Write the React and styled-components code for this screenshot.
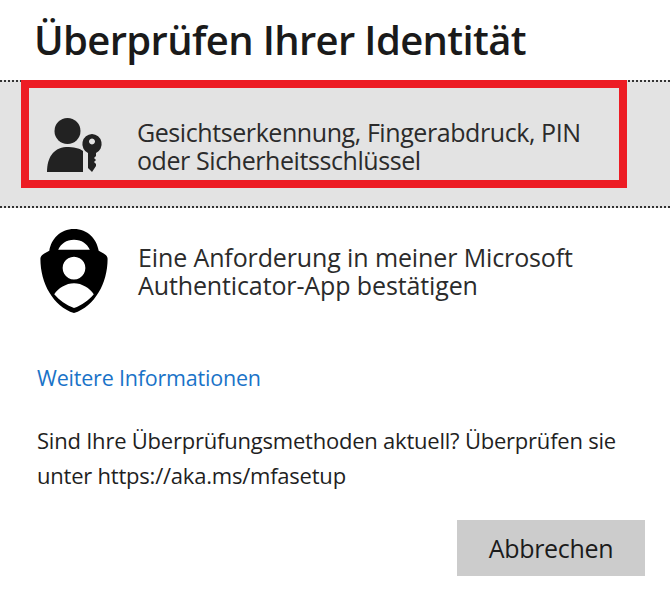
import styled, { createGlobalStyle } from "styled-components";

const GlobalStyle = createGlobalStyle`
  html, body {
    margin: 0;
    padding: 0;
    background: #fff;
  }
`;

const Dialog = styled.div`
  width: 670px;
  height: 600px;
  overflow: hidden;
  display: flex;
  flex-direction: column;
  font-family: "Open Sans", "Noto Sans", sans-serif;
  color: #1b1b1b;
  background: #fff;
`;

const Title = styled.h1`
  margin: 0;
  padding: 15px 0 0 34px;
  height: 80px;
  box-sizing: border-box;
  font-size: 40px;
  line-height: 50px;
  font-weight: 600;
  letter-spacing: -0.65px;
  white-space: nowrap;
  color: #1a1a1a;
`;

const Option = styled.div`
  position: relative;
  display: flex;
  align-items: ${(props) => (props.selected ? "flex-start" : "center")};
  height: ${(props) => (props.selected ? "128px" : "126px")};
  box-sizing: border-box;
  padding-left: ${(props) => (props.selected ? "46px" : "39px")};
  padding-top: ${(props) => (props.selected ? "36px" : "0")};
  background: ${(props) => (props.selected ? "#e3e3e3" : "#fff")};
  border-top: ${(props) => (props.selected ? "2px dotted #333" : "none")};
  border-bottom: ${(props) => (props.selected ? "2px dotted #333" : "none")};
`;

const Highlight = styled.div`
  position: absolute;
  left: 21px;
  top: -2px;
  width: 606px;
  height: 108px;
  box-sizing: border-box;
  border: 8px solid #ed1c24;
`;

const IconSlot = styled.div`
  width: ${(props) => props.width}px;
  flex: none;
  display: flex;
`;

const OptionText = styled.div`
  font-size: 25px;
  line-height: 28px;
  letter-spacing: ${(props) => props.spacing}px;
  white-space: nowrap;
  color: #2b2b2b;
`;

const MoreLink = styled.a`
  display: block;
  margin: 31px 0 0 37px;
  font-size: 21.5px;
  line-height: 26px;
  letter-spacing: -0.2px;
  color: #1a73c8;
  text-decoration: none;
`;

const Note = styled.p`
  margin: 32px 0 0 37px;
  width: 625px;
  font-size: 22px;
  line-height: 35px;
  letter-spacing: -0.22px;
  white-space: nowrap;
  color: #1f1f1f;
`;

const Footer = styled.div`
  display: flex;
  justify-content: flex-end;
  padding: 27px 25px 0 0;
`;

const CancelButton = styled.button`
  width: 188px;
  height: 56px;
  border: none;
  background: #cccccc;
  font-family: inherit;
  font-size: 25px;
  letter-spacing: -0.3px;
  color: #1b1b1b;
`;

function PersonKeyIcon() {
  return (
    <svg width="58" height="56" viewBox="0 0 58 56">
      <circle cx="21.5" cy="13" r="13" fill="#222" />
      <path
        d="M1 54 C1 40 7 30 20 29 C28 29 33 30 37 33 L37 54 Z"
        fill="#222"
      />
      <path
        fillRule="evenodd"
        d="M46 16 a10 10 0 0 1 4 19 v3 l-2 2 2 2 -2 2 2 2 v2 l-4 6 -4 -4 V35 a10 10 0 0 1 4 -19 Z M46 20.5 a3 3 0 1 0 0.01 0 Z"
        fill="#222"
      />
    </svg>
  );
}

function AuthenticatorIcon() {
  return (
    <svg width="70" height="84" viewBox="0 0 70 85">
      <path
        fillRule="evenodd"
        d="M35 0 C21 0 12 10 10 22 C4 25 1 27 1 30 C1 55 14 78 35 85 C56 78 69 55 69 30 C69 27 66 25 60 22 C58 10 49 0 35 0 Z M35 11 C27 11 22 15 19 21 L51 21 C48 15 43 11 35 11 Z M35 28 a11.5 11.5 0 1 0 0.01 0 Z M35 55 C27 55 19 60 15 66 C20 72 27 77 35 80 C43 77 50 72 55 66 C51 60 43 55 35 55 Z"
        fill="#000"
      />
    </svg>
  );
}

export default function App() {
  return (
    <>
      <GlobalStyle />
      <Dialog>
        <Title>Überprüfen Ihrer Identität</Title>
        <Option selected>
          <IconSlot width={91}>
            <PersonKeyIcon />
          </IconSlot>
          <OptionText spacing={-0.42}>
            Gesichtserkennung, Fingerabdruck, PIN
            <br />
            oder Sicherheitsschlüssel
          </OptionText>
          <Highlight />
        </Option>
        <Option>
          <IconSlot width={99}>
            <AuthenticatorIcon />
          </IconSlot>
          <OptionText spacing={-0.12}>
            Eine Anforderung in meiner Microsoft
            <br />
            Authenticator-App bestätigen
          </OptionText>
        </Option>
        <MoreLink href="#">Weitere Informationen</MoreLink>
        <Note>
          Sind Ihre Überprüfungsmethoden aktuell? Überprüfen sie
          <br />
          unter https://aka.ms/mfasetup
        </Note>
        <Footer>
          <CancelButton>Abbrechen</CancelButton>
        </Footer>
      </Dialog>
    </>
  );
}
